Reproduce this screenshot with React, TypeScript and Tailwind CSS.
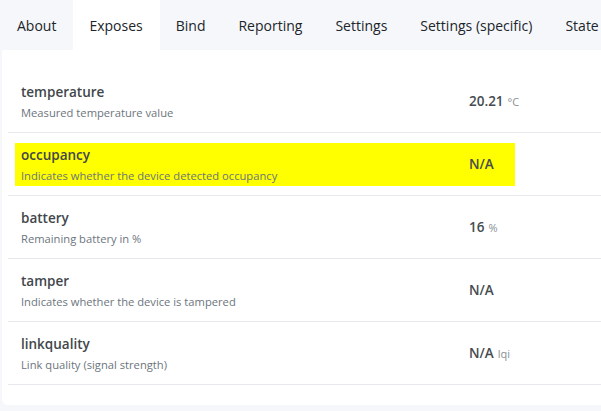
import React from "react";

const tabs = ["About", "Exposes", "Bind", "Reporting", "Settings", "Settings (specific)", "State"];

type Row = { name: string; desc: string; value: string; unit?: string; hl?: boolean };

const rows: Row[] = [
  { name: "temperature", desc: "Measured temperature value", value: "20.21", unit: "°C" },
  { name: "occupancy", desc: "Indicates whether the device detected occupancy", value: "N/A", hl: true },
  { name: "battery", desc: "Remaining battery in %", value: "16", unit: "%" },
  { name: "tamper", desc: "Indicates whether the device is tampered", value: "N/A" },
  { name: "linkquality", desc: "Link quality (signal strength)", value: "N/A", unit: "lqi" },
];

export default function App() {
  return (
    <div
      className="w-[601px] h-[411px] overflow-hidden bg-[#f5f7fb] text-[#212529]"
      style={{ fontFamily: '"Open Sans", "Noto Sans", sans-serif' }}
    >
      <div className="flex h-[50px] pl-px">
        {tabs.map((t) => (
          <div
            key={t}
            className={`flex items-center pl-4 pr-[17px] pt-px text-[14px] whitespace-nowrap ${
              t === "Exposes" ? "bg-white" : ""
            }`}
          >
            {t}
          </div>
        ))}
      </div>
      <div className="ml-[2px] bg-white rounded-bl-md pt-5 pb-5">
        {rows.map((r) => (
          <div key={r.name} className="ml-[6px] border-b border-[#e7e9ee] pl-[7px] py-[10px] h-[63px]">
            <div
              className={`w-[500px] h-[43px] px-[6px] flex items-center ${r.hl ? "bg-[#ffff00]" : ""}`}
            >
              <div className="w-[448px] shrink-0 h-[43px] pt-[2px] flex flex-col gap-px">
                <div className="text-[13.5px] font-semibold leading-[20px] text-[#41464b]">{r.name}</div>
                <div className="text-[11.2px] leading-[20px] text-[#6c757d]">{r.desc}</div>
              </div>
              <div className="flex shrink-0 items-baseline gap-[4px] whitespace-nowrap">
                <span className="text-[13.5px] font-semibold text-[#464b50]">{r.value}</span>
                {r.unit && <span className="text-[11px] text-[#8a9096]">{r.unit}</span>}
              </div>
            </div>
          </div>
        ))}
      </div>
    </div>
  );
}
